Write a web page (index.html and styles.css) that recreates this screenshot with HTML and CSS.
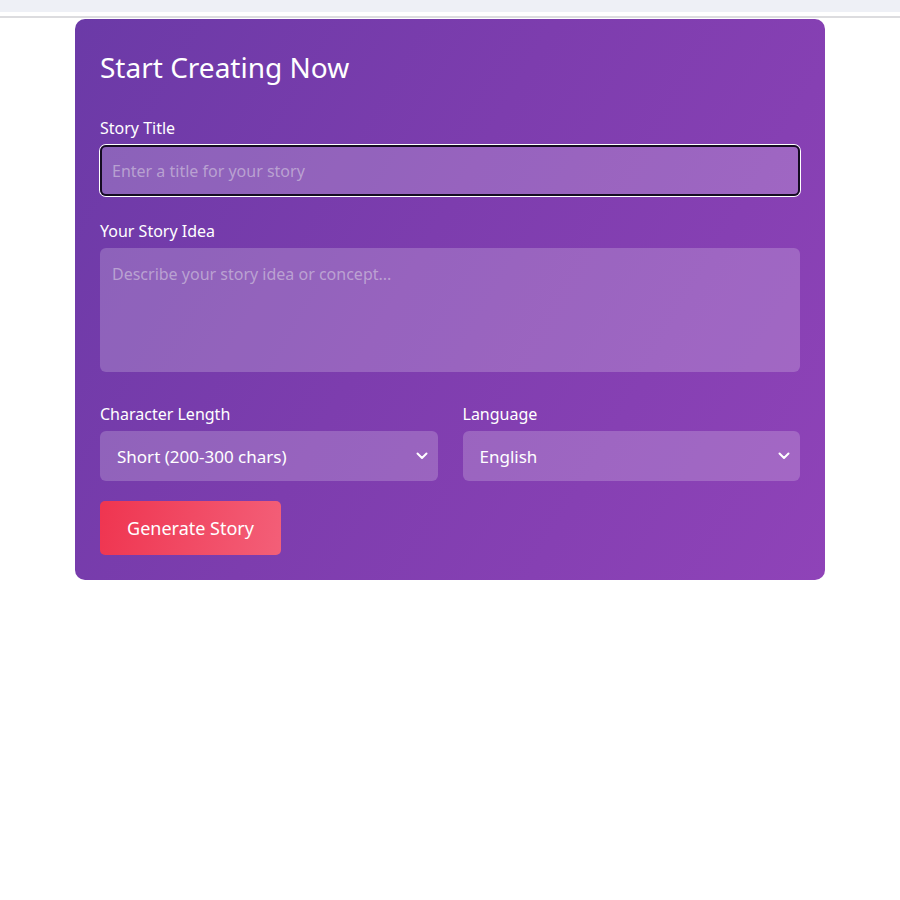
FILE: index.html
```html
<!DOCTYPE html>
<html>
<head>
<meta charset="utf-8">
<link rel="stylesheet" href="styles.css">
</head>
<body>
<div class="topbar"></div>
<div class="page">
  <form class="card">
    <h2 class="title">Start Creating Now</h2>
    <div class="field">
      <label class="label">Story Title</label>
      <input class="input focused" type="text" placeholder="Enter a title for your story">
    </div>
    <div class="field">
      <label class="label">Your Story Idea</label>
      <textarea class="input area" placeholder="Describe your story idea or concept..."></textarea>
    </div>
    <div class="row">
      <div class="field">
        <label class="label">Character Length</label>
        <div class="select"><span>Short (200-300 chars)</span>
          <svg width="12" height="8" viewBox="0 0 12 8"><path d="M1.5 1.5 L6 6 L10.5 1.5" fill="none" stroke="#fff" stroke-width="2" stroke-linecap="round" stroke-linejoin="round"/></svg>
        </div>
      </div>
      <div class="field">
        <label class="label">Language</label>
        <div class="select"><span>English</span>
          <svg width="12" height="8" viewBox="0 0 12 8"><path d="M1.5 1.5 L6 6 L10.5 1.5" fill="none" stroke="#fff" stroke-width="2" stroke-linecap="round" stroke-linejoin="round"/></svg>
        </div>
      </div>
    </div>
    <button class="btn" type="button">Generate Story</button>
  </form>
</div>
</body>
</html>
```
FILE: styles.css
```css
* { box-sizing: border-box; }
body {
  margin: 0;
  background: #fff;
  font-family: "Noto Sans", "Open Sans", sans-serif;
  color: #fff;
}
.topbar {
  height: 18px;
  background: linear-gradient(#eef0f6 0 12px, #fff 12px 16px, #dcdcdf 16px 18px);
}
.page {
  padding: 1px 75px 0;
}
.card {
  margin: 0;
  background: linear-gradient(120deg, #6b3aa7 0%, #7d3dae 45%, #8f43b8 100%);
  border-radius: 10px;
  padding: 29px 25px 25px;
  display: flex;
  flex-direction: column;
}
.title {
  margin: 0 0 31px;
  font-size: 28px;
  font-weight: 400;
  line-height: 38px;
}
.field {
  display: flex;
  flex-direction: column;
  margin-bottom: 24px;
}
.label {
  font-size: 16px;
  line-height: 22px;
  margin-bottom: 6px;
}
.input {
  width: 100%;
  height: 51px;
  border: none;
  border-radius: 6px;
  background: rgba(255,255,255,0.2);
  color: #fff;
  font-family: inherit;
  font-size: 16px;
  padding: 0 12px;
  outline: none;
}
.input::placeholder { color: rgba(215,205,225,0.6); }
.focused {
  box-shadow: inset 0 0 0 2px #150c22, 0 0 0 1px #fff;
}
.area {
  height: 124px;
  padding: 15px 12px;
  resize: none;
}
.row {
  display: grid;
  grid-template-columns: 1fr 1fr;
  gap: 25px;
  margin-top: 7px;
}
.row .field { margin-bottom: 20px; }
.select {
  height: 50px;
  border-radius: 6px;
  background: rgba(255,255,255,0.2);
  display: flex;
  align-items: center;
  justify-content: space-between;
  padding: 0 10px 0 17px;
  font-size: 17px;
}
.btn {
  align-self: flex-start;
  width: 181px;
  height: 54px;
  border: none;
  border-radius: 5px;
  background: linear-gradient(100deg, #ef3550, #f35f78);
  color: #fff;
  font-family: inherit;
  font-size: 18px;
}
```
